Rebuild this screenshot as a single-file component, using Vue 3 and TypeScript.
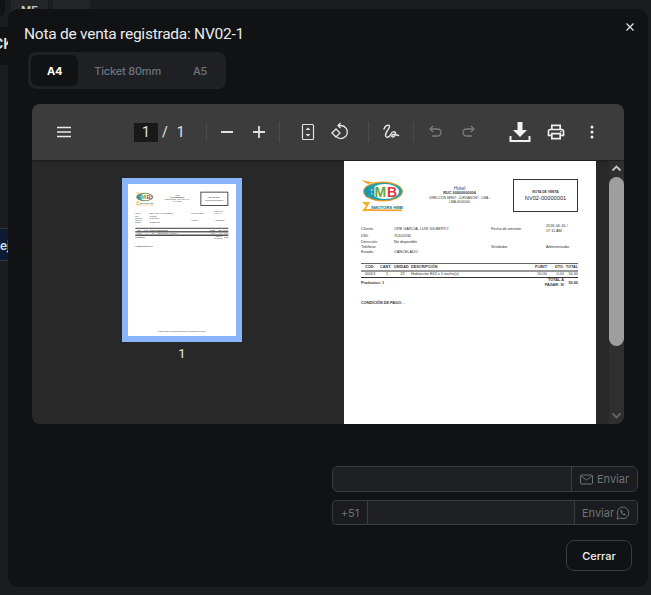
<script setup lang="ts">
import { ref } from 'vue'

interface InfoRow {
  label: string
  value: string
  label2?: string
  value2?: string
}

const tabs = ['A4', 'Ticket 80mm', 'A5']
const activeTab = ref('A4')

// the sidebar thumbnail and the main view show the same document
const panes = ['thumbs', 'pages']

const infoRows: InfoRow[] = [
  { label: 'Cliente:', value: 'ORE GARCIA, LUIS GILBERTO', label2: 'Fecha de emisión:', value2: '2026-06-16 / 17:11 AM' },
  { label: 'DNI:', value: '70102030' },
  { label: 'Dirección:', value: 'No disponible' },
  { label: 'Teléfono:', value: '', label2: 'Vendedor:', value2: 'Administrador' },
  { label: 'Estado:', value: 'CANCELADO' },
]

const headers = ['COD.', 'CANT.', 'UNIDAD', 'DESCRIPCIÓN', 'P.UNIT', 'DTO.', 'TOTAL']
const items = ['00001', '1', 'ZZ', 'Habitación E02 x 1 noche(s)', '50.00', '0.00', '50.00']
</script>

<template>
  <div class="screen">
    <div class="backdrop-items">
      <span class="bg-chip corner"></span>
      <span class="bg-chip">ME</span>
      <span class="bg-chip">...</span>
      <span class="bg-side top">CK</span>
      <span class="bg-side blue">ej</span>
    </div>

    <section class="modal">
      <button class="close" aria-label="Cerrar">
        <svg width="10" height="10" viewBox="0 0 10 10"><path d="M1.500 1.500l7 7M8.500 1.500l-7 7" stroke="#e4e6e8" stroke-width="1.200" /></svg>
      </button>
      <h2 class="title">Nota de venta registrada: NV02-1</h2>

      <div class="tabs">
        <button
          v-for="tab in tabs"
          :key="tab"
          class="tab"
          :class="{ active: tab === activeTab }"
          @click="activeTab = tab"
        >{{ tab }}</button>
      </div>

      <div class="viewer">
        <div class="toolbar">
          <button class="tool menu">
            <svg width="16" height="14" viewBox="0 0 16 14"><path d="M1 2.500h14M1 7h14M1 11.500h14" stroke="#e8e8e8" stroke-width="1.600" /></svg>
          </button>
          <span class="page-input">1</span>
          <span class="page-total"><i>/</i>1</span>
          <span class="sep first"></span>
          <button class="tool">
            <svg width="16" height="16" viewBox="0 0 16 16"><path d="M2 8h12" stroke="#e0e0e0" stroke-width="1.800" /></svg>
          </button>
          <button class="tool">
            <svg width="16" height="16" viewBox="0 0 16 16"><path d="M2 8h12M8 2v12" stroke="#e0e0e0" stroke-width="1.800" /></svg>
          </button>
          <span class="sep"></span>
          <button class="tool fit">
            <svg width="14" height="18" viewBox="0 0 14 18"><rect x="1.500" y="1.500" width="11" height="15" rx="1" fill="none" stroke="#e0e0e0" stroke-width="1.200" /><path d="M7 4.500l2.500 2.500h-5zM7 13.500l2.500-2.500h-5z" fill="#e0e0e0" /></svg>
          </button>
          <button class="tool">
            <svg width="20" height="20" viewBox="0 0 20 20" fill="none" stroke="#e8e8e8" stroke-width="1.300"><path d="M8.500 3.500h2.500a6.500 6.500 0 1 1-4 11.700" /><path d="M10.500 1l-2.500 2.500 2.500 2.500" /><path d="M6 7l4 4-4 4-4-4z" /></svg>
          </button>
          <span class="sep wide"></span>
          <button class="tool draw">
            <svg width="18" height="18" viewBox="0 0 18 18" fill="none" stroke="#e8e8e8" stroke-width="1.400" stroke-linecap="round"><path d="M2 6C3 2.500 7 1 7.500 3 8 5.500 3 9 3.500 12.500 4 15.500 7.500 14.500 9 11 10 8.500 13 8 13.500 10 14 12 12 14.500 10.500 14 9 13.500 10 11.500 12 11.500 13.500 11.500 15 12 16.500 12.500" /></svg>
          </button>
          <span class="sep narrow"></span>
          <button class="tool undo">
            <svg width="16" height="16" viewBox="0 0 16 16" fill="none" stroke="#7c7c7c" stroke-width="1.300"><path d="M5 2L2 5l3 3" /><path d="M2 5h7.500a3.500 3.500 0 0 1 0 7H4" /></svg>
          </button>
          <button class="tool">
            <svg width="16" height="16" viewBox="0 0 16 16" fill="none" stroke="#7c7c7c" stroke-width="1.300"><path d="M11 2l3 3-3 3" /><path d="M14 5H6.500a3.500 3.500 0 0 0 0 7H12" /></svg>
          </button>
          <button class="tool download">
            <svg width="22" height="22" viewBox="0 0 22 22"><path d="M8.500 1h5v8H18l-7 7-7-7h4.500z" fill="#f0f0f0" /><path d="M1.500 15v5h19v-5" fill="none" stroke="#f0f0f0" stroke-width="2" /></svg>
          </button>
          <button class="tool print">
            <svg width="20" height="20" viewBox="0 0 24 24"><path d="M19 8h-1V3H6v5H5c-1.660 0-3 1.340-3 3v6h4v4h12v-4h4v-6c0-1.660-1.340-3-3-3zM8 5h8v3H8V5zm8 14H8v-4h8v4zm2-4v-2H6v2H4v-4c0-.550.450-1 1-1h14c.550 0 1 .450 1 1v4h-2z" fill="#f0f0f0" /><circle cx="18" cy="11.500" r="1" fill="#f0f0f0" /></svg>
          </button>
          <button class="tool more">
            <svg width="16" height="16" viewBox="0 0 16 16" fill="#f0f0f0"><circle cx="8" cy="3" r="1.500" /><circle cx="8" cy="8" r="1.500" /><circle cx="8" cy="13" r="1.500" /></svg>
          </button>
        </div>

        <div class="viewer-body">
          <div v-for="pane in panes" :key="pane" :class="pane">
            <div class="doc-frame">
              <div class="doc-clip">
                <article class="doc">
                  <header class="doc-head">
                    <svg class="logo" viewBox="0 0 42 32">
                      <path d="M0 1l12 2.500-5 1.500z" fill="#f39a1f" />
                      <ellipse cx="22" cy="12.500" rx="20" ry="10" fill="#f39a1f" />
                      <ellipse cx="22" cy="12.500" rx="19" ry="8.800" fill="#1da0a8" />
                      <ellipse cx="24" cy="12.500" rx="14" ry="7.500" fill="#fff" />
                      <text x="4" y="18" class="logo-letter" fill="#1c8fb5">H</text>
                      <text x="13.500" y="18" class="logo-letter" fill="#6aa53a">M</text>
                      <text x="26" y="18" class="logo-letter" fill="#d8363c">B</text>
                      <path d="M1 23h8l-4 7h6v2H1l4-5z" fill="#f2b01e" />
                      <rect x="9" y="30.500" width="32" height="1.500" fill="#f39a1f" />
                      <text x="10" y="29.500" class="logo-sub" fill="#0f6f86">SMOTORS HMB</text>
                    </svg>
                    <div class="company">
                      <strong>Hotel</strong>
                      <b>RUC 00000000004</b>
                      <span>DIRECCION SERIO , LURIGANCHO , LIMA - LIMA 00000000</span>
                    </div>
                    <div class="doc-box">
                      <span>NOTA DE VENTA</span>
                      <b>NV02-00000001</b>
                    </div>
                  </header>
                  <div class="info">
                    <div v-for="row in infoRows" :key="row.label" class="info-row">
                      <b>{{ row.label }}</b><span>{{ row.value }}</span><b>{{ row.label2 }}</b><span>{{ row.value2 }}</span>
                    </div>
                  </div>
                  <div class="table">
                    <div class="cells head"><span v-for="h in headers" :key="h">{{ h }}</span></div>
                    <div class="cells body"><span v-for="(c, i) in items" :key="i">{{ c }}</span></div>
                  </div>
                  <div class="totals">
                    <b>Productos: 1</b>
                    <b class="pay">TOTAL A PAGAR: S/</b>
                    <b class="amount">50.00</b>
                  </div>
                  <p class="terms"><b>CONDICIÓN DE PAGO:</b> -</p>
                  <p class="foot">Para consultar el comprobante ingresar a la página web del hotel</p>
                </article>
              </div>
            </div>
            <span v-if="pane === 'thumbs'" class="thumb-num">1</span>
            <div v-else class="scrollbar">
              <svg width="11" height="7" viewBox="0 0 11 7"><path d="M1.500 5.500l4-4 4 4" fill="none" stroke="#c4c4c4" stroke-width="1.800" /></svg>
              <span class="scroll-thumb"></span>
              <svg class="down" width="11" height="7" viewBox="0 0 11 7"><path d="M1.500 1.500l4 4 4-4" fill="none" stroke="#666" stroke-width="1.800" /></svg>
            </div>
          </div>
        </div>
      </div>

      <div class="send">
        <div class="group">
          <input class="field" type="text" />
          <button class="addon btn email">
            <svg width="13" height="11" viewBox="0 0 13 11" fill="none" stroke="#6e7276"><rect x=".5" y="1" width="12" height="9" rx="1" /><path d="M1 2l5.500 4L12 2" /></svg>
            Enviar
          </button>
        </div>
        <div class="group phone">
          <span class="addon code">+51</span>
          <input class="field" type="text" />
          <button class="addon btn whats">
            Enviar
            <svg width="14" height="14" viewBox="0 0 14 14" fill="none" stroke="#6e7276"><path d="M1 13l1-3.300A5.800 5.800 0 1 1 4.400 12z" /><path d="M4.800 4c-.6.6-.5 1.800.6 3.200s2.500 2.300 3.400 2.100c.6-.1 1-.6 1-1.100L8.500 7.400l-.8.600c-.6-.2-1.300-.9-1.600-1.700l.5-.7L5.800 4z" fill="#6e7276" stroke="none" /></svg>
          </button>
        </div>
      </div>

      <div class="actions">
        <button class="closer">Cerrar</button>
      </div>
    </section>
  </div>
</template>

<style>
html, body { margin: 0; background: #1a1c1f; }
</style>

<style scoped>
.screen {
  position: relative;
  width: 651px;
  height: 595px;
  overflow: hidden;
  background: #1a1c1f;
  font-family: Inter, "Liberation Sans", sans-serif;
}

.backdrop-items { position: absolute; inset: 0; }
.bg-chip {
  position: absolute;
  top: -8px;
  left: 11px;
  width: 37px;
  height: 30px;
  border-radius: 4px;
  background: #232528;
  color: #c8cacc;
  font-size: 11px;
  font-weight: 600;
  line-height: 36px;
  text-align: center;
}
.bg-chip.corner { left: -30px; top: -10px; width: 35px; height: 27px; background: #111213; border-radius: 6px; }
.bg-chip:nth-child(3) { left: 53px; }
.bg-side {
  position: absolute;
  overflow: hidden;
  color: #e4e6e8;
  font-size: 14px;
  font-weight: 600;
}
.bg-side.top { top: 27px; left: -7px; width: 40px; height: 38px; line-height: 34px; background: #111213; }
.bg-side.blue {
  top: 228px;
  left: 0;
  width: 20px;
  height: 33px;
  box-sizing: border-box;
  border-top: 1px solid #30343a;
  border-bottom: 1px solid #30343a;
  background: #0e1a33;
  color: #cfe0f5;
  font-size: 12px;
  line-height: 33px;
}

.modal {
  position: absolute;
  top: 9px;
  left: 8px;
  width: 640px;
  height: 578px;
  box-sizing: border-box;
  padding-top: 16px;
  border-radius: 10px;
  background: #111213;
  color: #eceef0;
}

.close {
  position: absolute;
  top: 13px;
  right: 13px;
  width: 10px;
  height: 10px;
  padding: 0;
  border: 0;
  background: none;
  line-height: 0;
}

.title {
  margin: 0 0 9px 16px;
  font-family: Roboto, sans-serif;
  font-size: 15.500px;
  font-weight: 400;
  letter-spacing: -.25px;
  line-height: 18px;
  color: #e9ebed;
}

.tabs {
  display: inline-flex;
  box-sizing: border-box;
  height: 37px;
  margin-left: 20px;
  padding: 3px;
  border-radius: 8px;
  background: #1e2023;
  vertical-align: top;
}
.tab {
  padding: 0 16px;
  border: 0;
  border-radius: 6px;
  background: none;
  color: #6f757c;
  font-family: inherit;
  font-size: 11px;
  font-weight: 500;
  letter-spacing: -.2px;
}
.tab.active { background: #111213; color: #fff; font-weight: 700; }

.viewer {
  display: flex;
  flex-direction: column;
  width: 592px;
  height: 320px;
  margin: 15px 0 0 24px;
  overflow: hidden;
  border-radius: 8px;
  background: #282828;
}

.toolbar {
  display: flex;
  flex: none;
  align-items: center;
  height: 56px;
  padding-left: 12px;
  background: #3c3c3c;
  box-shadow: 0 1px 2px rgba(0, 0, 0, .3);
  color: #e8e8e8;
  font-family: Roboto, sans-serif;
  font-size: 14px;
}
.tool {
  display: flex;
  flex: none;
  align-items: center;
  justify-content: center;
  width: 32px;
  height: 32px;
  padding: 0;
  border: 0;
  background: none;
}
.tool.menu { width: 40px; }
.tool.fit { margin-left: 8px; }
.tool.draw { margin-left: 6px; }
.tool.undo { margin-left: 6px; }
.tool.download { margin-left: 20px; }
.tool.print { margin-left: 4px; }
.tool.more { margin-left: 4px; }

.page-input {
  flex: none;
  width: 24px;
  height: 19px;
  margin-left: 50px;
  background: #191919;
  line-height: 19px;
  text-align: center;
}
.page-total { flex: none; width: 30px; }
.page-total i { margin: 0 9px 0 4px; font-style: normal; }

.sep { flex: none; width: 1px; height: 20px; margin: 0 4px; background: #4a4a4a; }
.sep.first { margin-left: 18px; }
.sep.wide { margin-left: 12px; margin-right: 0; }
.sep.narrow { margin-left: 6px; margin-right: 0; }

.viewer-body { display: flex; flex: 1; min-height: 0; padding-top: 1px; }

.thumbs {
  display: flex;
  flex: none;
  flex-direction: column;
  align-items: center;
  width: 300px;
  padding-top: 17px;
}
.thumbs .doc-frame { padding: 6px; background: #8ab4f8; line-height: 0; }
.thumbs .doc-clip { width: 108px; height: 152px; overflow: hidden; background: #fff; }
.thumbs .doc { transform: scale(.4286); transform-origin: 0 0; }
.thumbs .doc-box { border-width: 2.500px; }
.thumbs .table { border-top-width: 3px; border-bottom-width: 3px; }
.thumbs .head { border-bottom-width: 3px; border-bottom-color: #444; }
.thumb-num { margin-top: 4px; font-family: Roboto, sans-serif; font-size: 13px; line-height: 16px; color: #e8e8e8; }

.pages { display: flex; flex: 1; align-items: flex-start; padding-left: 12px; }
.scrollbar {
  display: flex;
  flex: none;
  flex-direction: column;
  align-items: center;
  box-sizing: border-box;
  width: 15px;
  height: 263px;
  margin-left: 13px;
  padding-top: 4px;
  border-radius: 0 0 6px 0;
  background: #2f2f2f;
}
.scroll-thumb { width: 15px; height: 169px; margin-top: 5px; border-radius: 8px; background: #9e9e9e; }
.scrollbar .down { margin-top: auto; margin-bottom: 5px; }

.doc {
  flex: none;
  box-sizing: border-box;
  width: 252px;
  height: 356px;
  padding: 18px 18px 0 17px;
  background: #fff;
  color: #333;
  font-family: "Liberation Sans", sans-serif;
  font-size: 3.800px;
  line-height: 5px;
}
.doc p { margin: 0; }

.doc-head { display: flex; align-items: flex-start; height: 33px; }
.logo { flex: none; width: 42px; height: 32px; }
.logo-letter { font: 700 14px "Liberation Sans", sans-serif; }
.logo-sub { font: 700 4.200px "Liberation Sans", sans-serif; }

.company {
  display: flex;
  flex: none;
  flex-direction: column;
  align-items: center;
  width: 67px;
  margin: 7px 0 0 23px;
  line-height: 4.500px;
  text-align: center;
}
.company strong { font-size: 5px; font-weight: 400; line-height: 5px; color: #2a4a8a; }
.company span { font-size: 3px; }

.doc-box {
  display: flex;
  flex: none;
  flex-direction: column;
  align-items: center;
  justify-content: center;
  box-sizing: border-box;
  width: 65px;
  height: 33px;
  margin-left: 20px;
  border: 1px solid #333;
}
.doc-box span { font-size: 3.300px; font-weight: 700; }
.doc-box b { font-size: 5.700px; font-weight: 400; line-height: 6px; color: #223; }

.info { margin-top: 12px; }
.info-row { display: grid; grid-template-columns: 33px 97px 55px 24px; align-items: center; }
.info-row:first-child { height: 10px; }
.info-row:nth-child(2) { margin-bottom: 1px; }
.info-row b { font-weight: 400; white-space: nowrap; }

.table { margin-top: 7.500px; border-top: 1.500px solid #666; border-bottom: 1.500px solid #333; }
.cells { display: grid; grid-template-columns: 15px 14px 17px 119px 17px 17px 14px; padding-left: 4px; white-space: nowrap; }
.cells span:nth-child(n + 5) { text-align: right; }
.body span:nth-child(2), .body span:nth-child(3) { text-align: center; }
.head { box-sizing: border-box; height: 8px; border-bottom: 2px solid #999; font-weight: 700; line-height: 7px; }
.body { height: 5px; line-height: 5px; }

.totals { display: flex; align-items: center; height: 11px; }
.totals .pay { width: 22px; margin-left: auto; text-align: right; }
.totals .amount { width: 14px; text-align: right; }

.doc .terms { margin-top: 12.500px; }
.doc .foot { margin-top: 193px; text-align: center; }

.send {
  display: flex;
  flex-direction: column;
  gap: 8px;
  width: 306px;
  margin: 42px 10px 0 auto;
}
.group {
  display: flex;
  box-sizing: border-box;
  height: 26px;
  overflow: hidden;
  border: 1px solid #3a3c40;
  border-radius: 6px;
  background: #1e2023;
}
.group.phone { height: 25px; border-radius: 4px; }
.field {
  flex: 1;
  min-width: 0;
  padding: 0;
  border: 0;
  background: none;
}
.addon {
  display: flex;
  flex: none;
  align-items: center;
  justify-content: center;
  gap: 4px;
  box-sizing: border-box;
  padding: 0;
  border: 0;
  background: #1a1c1f;
  color: #6e7276;
  font-family: inherit;
  font-size: 11px;
}
.btn.email { width: 66px; border-left: 1px solid #3a3c40; }
.btn.whats { width: 63px; gap: 2px; border-left: 1px solid #3a3c40; }
.code { width: 35px; border-right: 1px solid #3a3c40; }

.actions { display: flex; justify-content: flex-end; margin: 15px 16px 0 0; }
.closer {
  width: 66px;
  height: 31px;
  padding: 0;
  border: 1px solid #3a3c40;
  border-radius: 8px;
  background: #111213;
  color: #f2f4f6;
  font-family: inherit;
  font-size: 11px;
  font-weight: 500;
}
</style>
